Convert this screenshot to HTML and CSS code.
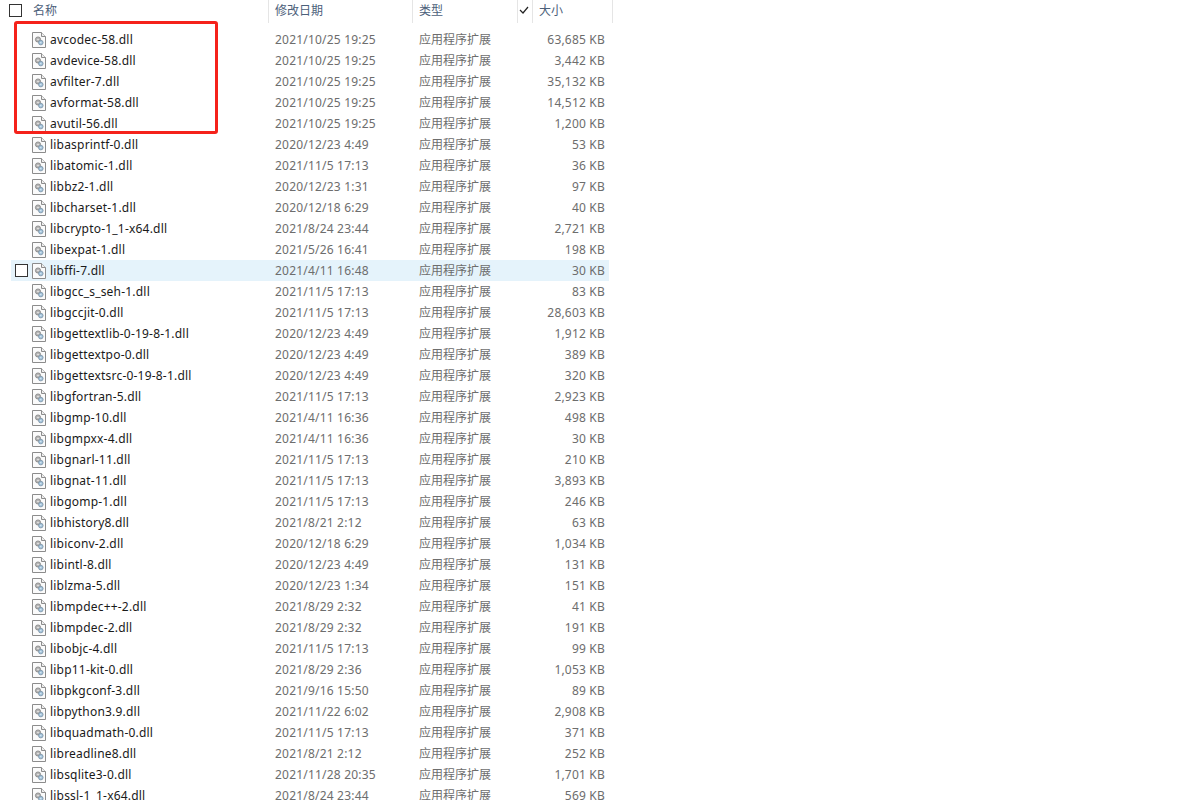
FILE: index.html
```html
<!DOCTYPE html>
<html lang="zh-CN">
<head>
  <meta charset="UTF-8">
  <title>bin</title>
  <link rel="stylesheet" href="styles.css">
</head>
<body>

<svg class="defs" width="0" height="0">
  <symbol id="dll" viewBox="0 0 14 16">
    <path d="M.5.5h9l4 4v11H.5z" fill="#fbfbfb" stroke="#8c8c8c"/>
    <path d="M9.5.5v4h4" fill="#eee" stroke="#8c8c8c"/>
    <circle cx="6" cy="7.5" r="2.6" fill="#b4b4b4" stroke="#828282" stroke-width=".8"/>
    <circle cx="8.8" cy="10.6" r="2.3" fill="#a3c4dc" stroke="#7a8fa2" stroke-width=".8"/>
    <circle cx="6" cy="7.5" r=".8" fill="#eee"/>
    <circle cx="8.8" cy="10.6" r=".7" fill="#e8f1f7"/>
  </symbol>
</svg>

<div class="header">
  <div class="th th-name"><span class="check head-check"></span>名称</div>
  <div class="th th-date">修改日期</div>
  <div class="th th-type">类型</div>
  <div class="th th-tick">
    <svg width="10" height="8" viewBox="0 0 10 8"><path d="M1 4l3 3 5-6" fill="none" stroke="#222" stroke-width="1.2"/></svg>
  </div>
  <div class="th th-size">大小</div>
</div>

<div class="list">
  <div class="row"><svg class="icon"><use href="#dll"/></svg><span class="name">avcodec-58.dll</span><span class="date">2021/10/25 19:25</span><span class="type">应用程序扩展</span><span class="size">63,685 KB</span></div>
  <div class="row"><svg class="icon"><use href="#dll"/></svg><span class="name">avdevice-58.dll</span><span class="date">2021/10/25 19:25</span><span class="type">应用程序扩展</span><span class="size">3,442 KB</span></div>
  <div class="row"><svg class="icon"><use href="#dll"/></svg><span class="name">avfilter-7.dll</span><span class="date">2021/10/25 19:25</span><span class="type">应用程序扩展</span><span class="size">35,132 KB</span></div>
  <div class="row"><svg class="icon"><use href="#dll"/></svg><span class="name">avformat-58.dll</span><span class="date">2021/10/25 19:25</span><span class="type">应用程序扩展</span><span class="size">14,512 KB</span></div>
  <div class="row"><svg class="icon"><use href="#dll"/></svg><span class="name">avutil-56.dll</span><span class="date">2021/10/25 19:25</span><span class="type">应用程序扩展</span><span class="size">1,200 KB</span></div>
  <div class="row"><svg class="icon"><use href="#dll"/></svg><span class="name">libasprintf-0.dll</span><span class="date">2020/12/23 4:49</span><span class="type">应用程序扩展</span><span class="size">53 KB</span></div>
  <div class="row"><svg class="icon"><use href="#dll"/></svg><span class="name">libatomic-1.dll</span><span class="date">2021/11/5 17:13</span><span class="type">应用程序扩展</span><span class="size">36 KB</span></div>
  <div class="row"><svg class="icon"><use href="#dll"/></svg><span class="name">libbz2-1.dll</span><span class="date">2020/12/23 1:31</span><span class="type">应用程序扩展</span><span class="size">97 KB</span></div>
  <div class="row"><svg class="icon"><use href="#dll"/></svg><span class="name">libcharset-1.dll</span><span class="date">2020/12/18 6:29</span><span class="type">应用程序扩展</span><span class="size">40 KB</span></div>
  <div class="row"><svg class="icon"><use href="#dll"/></svg><span class="name">libcrypto-1_1-x64.dll</span><span class="date">2021/8/24 23:44</span><span class="type">应用程序扩展</span><span class="size">2,721 KB</span></div>
  <div class="row"><svg class="icon"><use href="#dll"/></svg><span class="name">libexpat-1.dll</span><span class="date">2021/5/26 16:41</span><span class="type">应用程序扩展</span><span class="size">198 KB</span></div>
  <div class="row hover"><span class="check row-check"></span><svg class="icon"><use href="#dll"/></svg><span class="name">libffi-7.dll</span><span class="date">2021/4/11 16:48</span><span class="type">应用程序扩展</span><span class="size">30 KB</span></div>
  <div class="row"><svg class="icon"><use href="#dll"/></svg><span class="name">libgcc_s_seh-1.dll</span><span class="date">2021/11/5 17:13</span><span class="type">应用程序扩展</span><span class="size">83 KB</span></div>
  <div class="row"><svg class="icon"><use href="#dll"/></svg><span class="name">libgccjit-0.dll</span><span class="date">2021/11/5 17:13</span><span class="type">应用程序扩展</span><span class="size">28,603 KB</span></div>
  <div class="row"><svg class="icon"><use href="#dll"/></svg><span class="name">libgettextlib-0-19-8-1.dll</span><span class="date">2020/12/23 4:49</span><span class="type">应用程序扩展</span><span class="size">1,912 KB</span></div>
  <div class="row"><svg class="icon"><use href="#dll"/></svg><span class="name">libgettextpo-0.dll</span><span class="date">2020/12/23 4:49</span><span class="type">应用程序扩展</span><span class="size">389 KB</span></div>
  <div class="row"><svg class="icon"><use href="#dll"/></svg><span class="name">libgettextsrc-0-19-8-1.dll</span><span class="date">2020/12/23 4:49</span><span class="type">应用程序扩展</span><span class="size">320 KB</span></div>
  <div class="row"><svg class="icon"><use href="#dll"/></svg><span class="name">libgfortran-5.dll</span><span class="date">2021/11/5 17:13</span><span class="type">应用程序扩展</span><span class="size">2,923 KB</span></div>
  <div class="row"><svg class="icon"><use href="#dll"/></svg><span class="name">libgmp-10.dll</span><span class="date">2021/4/11 16:36</span><span class="type">应用程序扩展</span><span class="size">498 KB</span></div>
  <div class="row"><svg class="icon"><use href="#dll"/></svg><span class="name">libgmpxx-4.dll</span><span class="date">2021/4/11 16:36</span><span class="type">应用程序扩展</span><span class="size">30 KB</span></div>
  <div class="row"><svg class="icon"><use href="#dll"/></svg><span class="name">libgnarl-11.dll</span><span class="date">2021/11/5 17:13</span><span class="type">应用程序扩展</span><span class="size">210 KB</span></div>
  <div class="row"><svg class="icon"><use href="#dll"/></svg><span class="name">libgnat-11.dll</span><span class="date">2021/11/5 17:13</span><span class="type">应用程序扩展</span><span class="size">3,893 KB</span></div>
  <div class="row"><svg class="icon"><use href="#dll"/></svg><span class="name">libgomp-1.dll</span><span class="date">2021/11/5 17:13</span><span class="type">应用程序扩展</span><span class="size">246 KB</span></div>
  <div class="row"><svg class="icon"><use href="#dll"/></svg><span class="name">libhistory8.dll</span><span class="date">2021/8/21 2:12</span><span class="type">应用程序扩展</span><span class="size">63 KB</span></div>
  <div class="row"><svg class="icon"><use href="#dll"/></svg><span class="name">libiconv-2.dll</span><span class="date">2020/12/18 6:29</span><span class="type">应用程序扩展</span><span class="size">1,034 KB</span></div>
  <div class="row"><svg class="icon"><use href="#dll"/></svg><span class="name">libintl-8.dll</span><span class="date">2020/12/23 4:49</span><span class="type">应用程序扩展</span><span class="size">131 KB</span></div>
  <div class="row"><svg class="icon"><use href="#dll"/></svg><span class="name">liblzma-5.dll</span><span class="date">2020/12/23 1:34</span><span class="type">应用程序扩展</span><span class="size">151 KB</span></div>
  <div class="row"><svg class="icon"><use href="#dll"/></svg><span class="name">libmpdec++-2.dll</span><span class="date">2021/8/29 2:32</span><span class="type">应用程序扩展</span><span class="size">41 KB</span></div>
  <div class="row"><svg class="icon"><use href="#dll"/></svg><span class="name">libmpdec-2.dll</span><span class="date">2021/8/29 2:32</span><span class="type">应用程序扩展</span><span class="size">191 KB</span></div>
  <div class="row"><svg class="icon"><use href="#dll"/></svg><span class="name">libobjc-4.dll</span><span class="date">2021/11/5 17:13</span><span class="type">应用程序扩展</span><span class="size">99 KB</span></div>
  <div class="row"><svg class="icon"><use href="#dll"/></svg><span class="name">libp11-kit-0.dll</span><span class="date">2021/8/29 2:36</span><span class="type">应用程序扩展</span><span class="size">1,053 KB</span></div>
  <div class="row"><svg class="icon"><use href="#dll"/></svg><span class="name">libpkgconf-3.dll</span><span class="date">2021/9/16 15:50</span><span class="type">应用程序扩展</span><span class="size">89 KB</span></div>
  <div class="row"><svg class="icon"><use href="#dll"/></svg><span class="name">libpython3.9.dll</span><span class="date">2021/11/22 6:02</span><span class="type">应用程序扩展</span><span class="size">2,908 KB</span></div>
  <div class="row"><svg class="icon"><use href="#dll"/></svg><span class="name">libquadmath-0.dll</span><span class="date">2021/11/5 17:13</span><span class="type">应用程序扩展</span><span class="size">371 KB</span></div>
  <div class="row"><svg class="icon"><use href="#dll"/></svg><span class="name">libreadline8.dll</span><span class="date">2021/8/21 2:12</span><span class="type">应用程序扩展</span><span class="size">252 KB</span></div>
  <div class="row"><svg class="icon"><use href="#dll"/></svg><span class="name">libsqlite3-0.dll</span><span class="date">2021/11/28 20:35</span><span class="type">应用程序扩展</span><span class="size">1,701 KB</span></div>
  <div class="row"><svg class="icon"><use href="#dll"/></svg><span class="name">libssl-1_1-x64.dll</span><span class="date">2021/8/24 23:44</span><span class="type">应用程序扩展</span><span class="size">569 KB</span></div>
</div>

<div class="redbox"></div>

</body>
</html>
```

FILE: styles.css
```css
html, body {
  height: 800px;
  overflow: hidden;
}
body {
  margin: 0;
  position: relative;
  background: #fff;
  font-family: 'Noto Sans', 'Noto Sans CJK SC', sans-serif;
  font-size: 12px;
  color: #6d6d6d;
}
.defs {
  position: absolute;
}
.header {
  display: flex;
  height: 23px;
  margin-bottom: 6px;
  color: #4c607a;
}
.th {
  display: flex;
  align-items: center;
  height: 23px;
  box-sizing: border-box;
  border-right: 1px solid #e5e5e5;
  padding-bottom: 3px;
}
.th-name {
  width: 269px;
  padding-left: 9px;
}
.th-date {
  width: 144px;
  padding-left: 6px;
}
.th-type {
  width: 105px;
  padding-left: 6px;
}
.th-tick {
  width: 15px;
  padding-left: 1px;
}
.th-size {
  width: 80px;
  padding-left: 6px;
}
.check {
  display: block;
  box-sizing: border-box;
  width: 13px;
  height: 13px;
  border: 1px solid #333;
  background: #fff;
}
.head-check {
  margin-right: 11px;
}
.list {
  margin-left: 11px;
  width: 598px;
}
.row {
  position: relative;
  display: flex;
  align-items: center;
  height: 21px;
  padding-left: 21px;
  box-sizing: border-box;
}
.row.hover {
  background: #e5f3fb;
}
.row-check {
  position: absolute;
  left: 4px;
  top: 4px;
}
.icon {
  flex: none;
  width: 14px;
  height: 16px;
  margin-right: 4px;
}
.name {
  width: 225px;
  flex: none;
  color: #1a1a1a;
  white-space: nowrap;
  letter-spacing: .2px;
}
.date {
  width: 144px;
  flex: none;
  letter-spacing: .2px;
}
.type {
  width: 100px;
  flex: none;
  padding-bottom: 2px;
}
.size {
  width: 86px;
  flex: none;
  text-align: right;
  letter-spacing: .2px;
}
.redbox {
  position: absolute;
  left: 14px;
  top: 21px;
  width: 204px;
  height: 113px;
  box-sizing: border-box;
  border: 3px solid #f5221b;
  border-radius: 3px;
}
```
